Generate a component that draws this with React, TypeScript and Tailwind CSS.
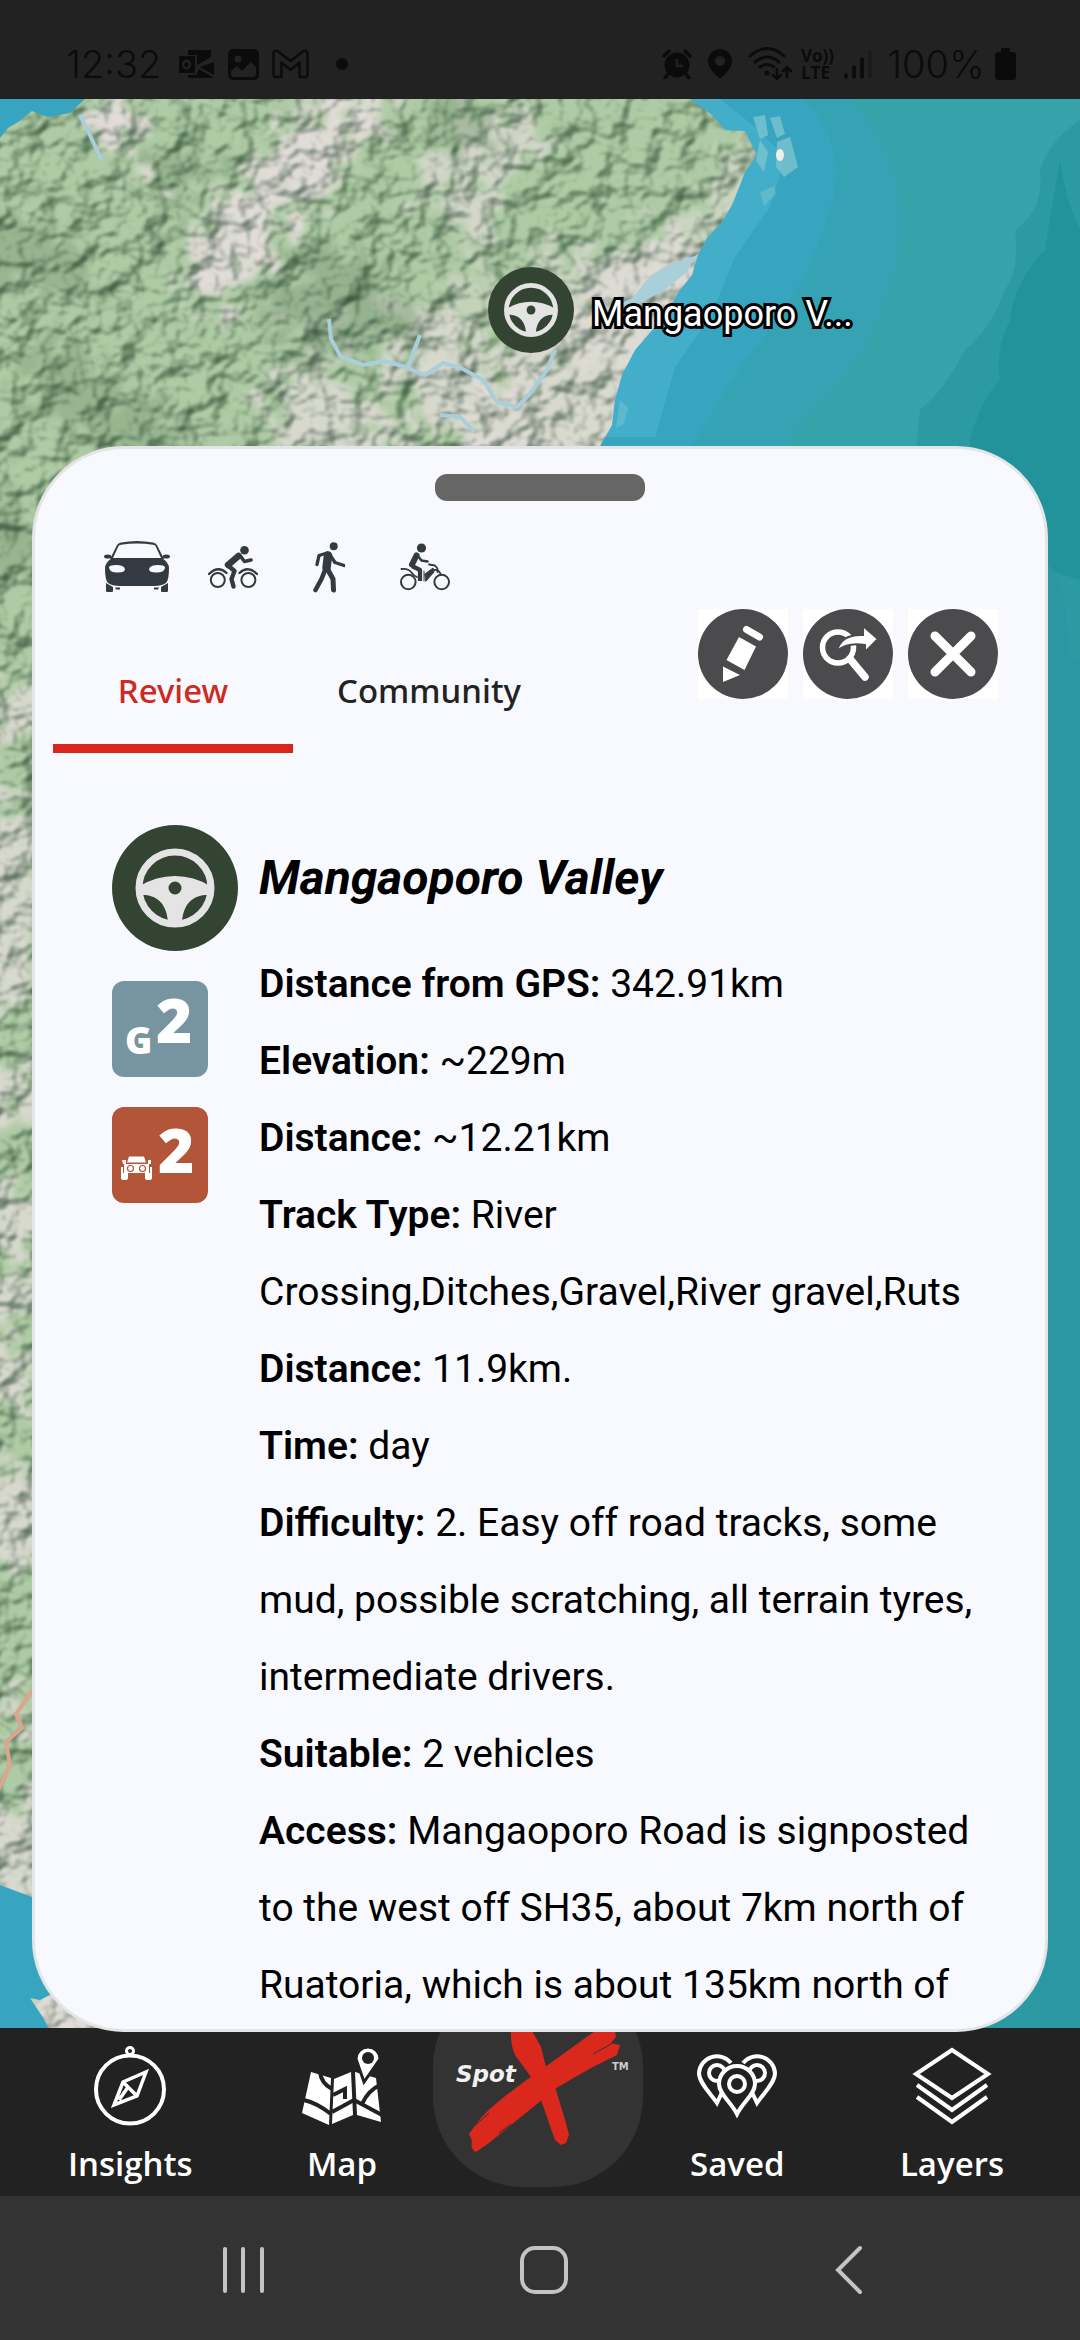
import { FC, ReactNode } from 'react';

const details: { label: string; text: string }[] = [
  { label: 'Distance from GPS:', text: '342.91km' },
  { label: 'Elevation:', text: '~229m' },
  { label: 'Distance:', text: '~12.21km' },
  {
    label: 'Track Type:',
    text: 'River Crossing,Ditches,Gravel,River gravel,Ruts',
  },
  { label: 'Distance:', text: '11.9km.' },
  { label: 'Time:', text: 'day' },
  {
    label: 'Difficulty:',
    text: '2. Easy off road tracks, some mud, possible scratching, all terrain tyres, intermediate drivers.',
  },
  { label: 'Suitable:', text: '2 vehicles' },
  {
    label: 'Access:',
    text: 'Mangaoporo Road is signposted to the west off SH35, about 7km north of Ruatoria, which is about 135km north of',
  },
];

const StatusBar: FC = () => (
  <header className="flex h-[99px] items-end justify-between bg-[#222222] pr-16 pb-[15px] pl-[66px] font-['Inter',sans-serif] text-[38px] leading-10 font-light text-[#0b0b0b]">
    <div className="flex items-center">
      <span className="w-[112px]">12:32</span>
      <svg width="37" height="30" viewBox="0 0 37 30" fill="currentColor">
        <path d="M10 1h23v7l-14 8V6H10zM36 13v13l-14-8zM10 26h8l3-6 15 9H10z" />
        <path
          fillRule="evenodd"
          d="M1 7h16v17H1zM8.500 10.500a4.500 5 0 1 0 .1 0zM8.500 13a2.200 2.700 0 1 1-.1 0z"
        />
      </svg>
      <svg className="ml-[13px]" width="31" height="31" viewBox="0 0 31 31">
        <rect width="31" height="31" rx="5" fill="currentColor" />
        <circle cx="10" cy="10" r="3.500" fill="#222222" />
        <path d="M3 22l6-5 5 5 9-9 5 5v7q0 3-3 3H6q-3 0-3-3z" fill="#222222" />
      </svg>
      <svg
        className="ml-[13px]"
        width="37"
        height="30"
        viewBox="0 0 37 30"
        fill="none"
        stroke="currentColor"
        strokeWidth="2.400"
        strokeLinejoin="round"
      >
        <path d="M1.500 26V4q1-3 4-2l13 10L31.500 2q3-1 4 2v22q0 2-2 2h-6V13.500l-9 7.500-9-7.500V28h-6q-2 0-2-2z" />
      </svg>
      <span className="ml-[27px] h-3 w-3 rounded-full bg-[#0b0b0b]" />
    </div>
    <div className="flex items-center">
      <svg width="30" height="30" viewBox="0 0 30 30" fill="currentColor">
        <circle cx="15" cy="16" r="12.500" />
        <path
          d="M2 7l5-5M28 7l-5-5M6 25l-3 4M24 25l3 4"
          stroke="currentColor"
          strokeWidth="3.500"
          strokeLinecap="round"
        />
        <path d="M15 10v7h6" fill="none" stroke="#222222" strokeWidth="2.500" />
      </svg>
      <svg className="ml-4" width="24" height="30" viewBox="0 0 24 30">
        <path
          fillRule="evenodd"
          fill="currentColor"
          d="M12 0a12 12 0 0 1 12 12c0 7-6 12-12 18C6 24 0 19 0 12A12 12 0 0 1 12 0zm0 7a5 5 0 1 0 .1 0z"
        />
      </svg>
      <svg
        className="ml-4"
        width="44"
        height="34"
        viewBox="0 0 44 34"
        fill="none"
        stroke="currentColor"
        strokeWidth="3"
        strokeLinecap="round"
      >
        <path d="M2 9q17-15 34 0M7 15q12-10 24 0M12 20q7-5 14 0" />
        <path d="M29 22v10m-4-4l4 4 4-4M39 30V20m-4 4l4-4 4 4" strokeWidth="2.600" />
        <circle cx="19" cy="26" r="1" />
      </svg>
      <span className="ml-[9px] flex w-[31px] flex-col font-['Open_Sans',sans-serif] text-[17px] leading-[17px] font-bold">
        <span>Vo))</span>
        <span>LTE</span>
      </span>
      <svg
        className="ml-3"
        width="28"
        height="32"
        viewBox="0 0 28 32"
        stroke="currentColor"
        strokeWidth="3.600"
        strokeLinecap="round"
      >
        <path d="M2 27v2M10 19v10M18 11v18" />
        <path d="M26 4v25" opacity="0.300" />
      </svg>
      <span className="ml-[15px] w-[104px]">100%</span>
      <svg className="ml-1" width="21" height="32" viewBox="0 0 21 32" fill="currentColor">
        <path d="M6 0h9v4h3q3 0 3 3v22q0 3-3 3H3q-3 0-3-3V7q0-3 3-3h3z" />
      </svg>
    </div>
  </header>
);

const SteeringWheel: FC<{ className: string }> = ({ className }) => (
  <svg className={className} viewBox="0 0 126 126">
    <circle cx="63" cy="63" r="63" fill="#334433" />
    <circle cx="63" cy="63" r="36" fill="none" stroke="#e4e4e4" strokeWidth="7" />
    <path
      d="M28 61Q44 51 63 51T98 61V70C84 69 71 76 70 98H56C55 76 42 69 28 70z"
      fill="#e4e4e4"
    />
    <circle cx="63" cy="63" r="6.500" fill="#334433" />
  </svg>
);

const TerrainMap: FC = () => (
  <svg
    className="absolute inset-0 h-full w-full"
    viewBox="0 99 1080 1929"
    preserveAspectRatio="xMidYMin slice"
    aria-hidden="true"
  >
    <defs>
      <filter
        id="relief"
        x="-80"
        y="19"
        width="1160"
        height="2089"
        filterUnits="userSpaceOnUse"
        colorInterpolationFilters="sRGB"
      >
        <feTurbulence type="fractalNoise" baseFrequency="0.045" numOctaves="4" seed="4" result="rough" />
        <feDisplacementMap in="SourceGraphic" in2="rough" scale="110" xChannelSelector="R" yChannelSelector="G" result="moved" />
        <feGaussianBlur in="moved" stdDeviation="3" result="ground" />
        <feTurbulence type="fractalNoise" baseFrequency="0.032 0.036" numOctaves="3" seed="11" result="hills" />
        <feDiffuseLighting in="hills" surfaceScale="13" diffuseConstant="1.120" lightingColor="#ffffff" result="light">
          <feDistantLight azimuth="225" elevation="58" />
        </feDiffuseLighting>
        <feComponentTransfer in="light" result="shade">
          <feFuncR type="linear" slope="0.620" intercept="0.350" />
          <feFuncG type="linear" slope="0.520" intercept="0.450" />
          <feFuncB type="linear" slope="0.580" intercept="0.390" />
        </feComponentTransfer>
        <feBlend in="ground" in2="shade" mode="multiply" result="lit" />
        <feGaussianBlur in="lit" stdDeviation="1" />
      </filter>
      <clipPath id="land">
        <path d="M85 99L70 113 48 117 32 111 18 122 8 128 0 138V1885L32 1897 90 1900 500 1900 560 600 600 446 612 425 615 400 622 375 635 350 648 335 665 315 680 290 692 275 698 255 707 238 722 222 732 205 740 185 745 172 757 155 752 145 745 131 725 130 712 115 690 99z" />
        <path d="M30 1998l10 2 12-6 100 0v40H52l-10-18z" />
      </clipPath>
    </defs>
    <rect y="99" width="1080" height="1929" fill="#38a5c0" />
    <path
      d="M690 99h30l35 28 30 30-15 50-35 50-25 60-35 50-20 70h-90z"
      fill="#43aeca"
    />
    <path
      d="M800 99q50 40 30 110t-60 120-50 70-45 70v1579h435V99z"
      fill="#35a3b4"
    />
    <path d="M850 99q70 80 45 170t-70 130-30 60v1569h290V99z" fill="#36a2aa" />
    <path
      d="M1080 120q-30 20-40 50 5 40-25 60 5 40-10 60-15 40-40 60-20 40-45 60l-6 60v1559h168z"
      fill="#2b9aa3"
    />
    <path
      d="M1060 160q-10 60-15 90-30 30-35 70-15 30-10 60-20 20-30 60l10 60 68 40v30l32 10V230q-15-30-20-70z"
      fill="#22939b"
    />
    <path d="M1040 560q24 10 26 60t14 40v1368h-40z" fill="#2b97a2" />
    <g fill="#7cc3d0">
      <path d="M753 117l12-2 3 20-8 4zM770 118l10-2 5 18-8 4zM777 142l13-5 8 30-14 10-8-10zM760 140l8 12-4 20-8-12z" opacity="0.800" />
      <path d="M760 192l14-6 2 8-12 12zM620 400l8 8-4 16-8 4z" opacity="0.500" />
    </g>
    <ellipse cx="780" cy="155" rx="4" ry="6" fill="#f1efe6" />
    <g clipPath="url(#land)">
      <g filter="url(#relief)">
        <rect x="-160" y="-60" width="1300" height="2300" fill="#b4d2aa" />
        <g fill="#e8e3de">
          <path d="M85 90l30-10 10 40 30 40-10 20-30-30-20-30z" />
          <path d="M310 100l70 0 10 30-40 20-10 40-50 20-20 40-50 60-40-10 10-50 30-50 50-40z" />
          <path d="M470 110l70 0-10 40-40 40 10 40-10 40-20-20-40-60-20 30 10-60z" opacity="0.700" />
          <path d="M430 300l30-20 60 0-20 50-60 20z" opacity="0.400" />
          <path d="M530 240l80 10 60-20 50-50 20-40 30-20 10 60-40 120-80 60-80 0-30-40z" opacity="0.550" />
          <path d="M520 340l50-10 20-60 90-40 40 20-100 240h-170l0-60 40-20z" opacity="0.850" />
          <path d="M380 300l50 0 60 60 30 50-20 50-40-20-60-60z" opacity="0.800" />
          <path d="M290 320l40 0 10 40-30 20zM270 380l50-10 40 50 40-10 20 20-30 40-50 10-60-30z" opacity="0.800" />
          <path
            d="M-90 700l150-20v50l-150 30zM-90 800h140v220l-140-20zM-90 1060h150v60h-150zM-90 1180l140 20v50l-140 20zM-90 1280h140v40h-140zM-90 1360l140-20v60l-140 10zM-90 1480l140-20v110l-140-10zM-90 1700h140v30h-140zM-90 1800h150v130h-150z"
            opacity="0.800"
          />
          <path d="M20 1980h140v70H20z" />
        </g>
        <g fill="#7f9f7b">
          <path d="M340 240l60 50 40 60-60-10-60 20-60-40 20-50z" opacity="0.500" />
          <path
            d="M-90 180l180 60-10 60-170-20zM30 330l120 60 60 70-110-10-80-60zM430 90l70 10-10 50-60-10zM160 130l60 30-20 60-50-20zM-90 480l130 20v70h-130z"
            opacity="0.450"
          />
        </g>
      </g>
      <path
        d="M555 350l-8 20-18 25-12 12-20-5-14-22-22-12-18-5-18 12-20-8-20-6-22 4-22-8-10-18-2-20M420 335l-12 32M80 115l8 16 14 30M440 415l20 2 15 15M700 255l-18 12"
        fill="none"
        stroke="#a9cfdb"
        strokeWidth="4"
      />
      <path d="M695 256l-8 16-25 20-25 12-35 8 30-14 18-22 20-12z" fill="#a9cfdb" />
      <path
        d="M34 1688l-18 26 6 14-16 14 4 24-12 24"
        fill="none"
        stroke="#dba68c"
        strokeWidth="4"
      />
    </g>
  </svg>
);

const MapMarker: FC = () => (
  <div className="absolute top-[168px] left-[488px] flex items-center gap-[18px]">
    <SteeringWheel className="h-[86px] w-[86px]" />
    <span className="pt-2 font-['Roboto',sans-serif] text-[36px] leading-10 text-white [-webkit-text-stroke:6px_black] [paint-order:stroke_fill]">
      Mangaoporo V...
    </span>
  </div>
);

const ActivityIcons: FC = () => (
  <div className="flex items-center pt-9 pl-[54px] text-[#343a42]">
    <span className="flex w-24 justify-center">
      <svg width="66" height="60" viewBox="0 -4 66 60" fill="currentColor">
        <path
          fillRule="evenodd"
          d="M6 18L13 4Q14 2 17 1.500Q33-1.500 49 1.500Q52 2 53 4L60 18zM9 17H57L51.500 5Q51 4 49 3.700Q33 1.500 17 3.700Q15 4 14.500 5z"
        />
        <ellipse cx="3.700" cy="15.500" rx="3.700" ry="2" />
        <ellipse cx="62.300" cy="15.500" rx="3.700" ry="2" />
        <path
          fillRule="evenodd"
          d="M8 17H58Q65 22 65 27Q65 39 62 42Q58 45 50 45H16Q8 45 4 42Q1 39 1 27Q1 22 8 17zM5 26Q5 31 12 31.500Q21 32 21 28Q20 24 12 24Q6 24 5 26zM61 26Q60 24 54 24Q46 24 45 28Q45 32 54 31.500Q61 31 61 26z"
        />
        <path d="M2 42L9 46V50Q9 51 8 51H3.500Q2 51 2 50zM64 42L57 46V50Q57 51 58 51H62.500Q64 51 64 50zM11 46.500h5v2h-4zM50 46.500h5l-1 2h-4z" />
      </svg>
    </span>
    <span className="flex w-24 justify-center">
      <svg
        width="50"
        height="60"
        viewBox="0 -9 50 60"
        fill="none"
        stroke="currentColor"
        strokeLinecap="round"
        strokeLinejoin="round"
      >
        <circle cx="36.500" cy="4.300" r="4.300" fill="currentColor" stroke="none" />
        <path d="M30.500 10L20 19" strokeWidth="6.500" />
        <path d="M32 9.500L36.500 15.500L43 14" strokeWidth="3.600" />
        <path d="M20 19.500L26.500 25L23.500 33L25.500 40.500" strokeWidth="4.400" />
        <circle cx="9.800" cy="34" r="7" strokeWidth="2" />
        <circle cx="40.400" cy="34" r="7" strokeWidth="2" />
        <path d="M1 28Q10 19 18.500 27M31.500 27Q40 19 49 28" strokeWidth="2.400" />
      </svg>
    </span>
    <span className="flex w-24 justify-center">
      <svg
        width="32"
        height="60"
        viewBox="0 -5 32 60"
        fill="none"
        stroke="currentColor"
        strokeLinecap="round"
        strokeLinejoin="round"
      >
        <circle cx="20.700" cy="4.300" r="4" fill="currentColor" stroke="none" />
        <path d="M15 13.500L13.500 26" strokeWidth="8.500" />
        <path d="M14 11L6 13.500L4 22.500" strokeWidth="3.400" />
        <path d="M17 13L22 20.500L31 23.500" strokeWidth="3.400" />
        <path d="M12.500 27L8.500 37L2.500 48" strokeWidth="4.600" />
        <path d="M14.500 27L20 37L20.500 48" strokeWidth="5" />
      </svg>
    </span>
    <span className="flex w-24 justify-center">
      <svg
        width="50"
        height="60"
        viewBox="0 -6 50 60"
        fill="none"
        stroke="currentColor"
        strokeLinecap="round"
        strokeLinejoin="round"
      >
        <circle cx="21.500" cy="5" r="4.600" fill="currentColor" stroke="none" />
        <path d="M16.500 12.500L12 21.500" strokeWidth="6" />
        <path d="M17 12L21.500 17.500L27.500 18.500" strokeWidth="2.600" />
        <path d="M12 23L20 27V38" strokeWidth="4.200" strokeLinecap="butt" />
        <path d="M25 31L33 25L34 29L26 38zM24 28V38" fill="currentColor" strokeWidth="1" />
        <path d="M29 21.500L35 22.500L37.500 25.500V29M34 27Q39 26 41 32M1.500 26Q8 25 11 29T17 34" strokeWidth="1.800" />
        <circle cx="8.300" cy="39" r="7.300" strokeWidth="2" />
        <circle cx="41.700" cy="39" r="7.300" strokeWidth="2" />
      </svg>
    </span>
  </div>
);

const RoundButton: FC<{ label: string; children: ReactNode }> = ({
  label,
  children,
}) => (
  <button type="button" aria-label={label} className="bg-white">
    <svg width="90" height="90" viewBox="0 0 90 90">
      <circle cx="45" cy="45" r="45" fill="#4b4b4d" />
      {children}
    </svg>
  </button>
);

const CardToolbar: FC = () => (
  <div className="mt-3 flex items-start justify-between pr-[47px] pl-[18px]">
    <div
      role="tablist"
      className="flex font-['Noto_Sans',sans-serif] text-[33px] leading-12 font-medium"
    >
      <button
        type="button"
        role="tab"
        aria-selected="true"
        className="h-36 w-60 border-b-9 border-[#da251c] pt-7 text-[#cf2a22]"
      >
        Review
      </button>
      <button
        type="button"
        role="tab"
        aria-selected="false"
        className="h-36 w-[272px] border-b-9 border-transparent pt-7 text-[#222222]"
      >
        Community
      </button>
    </div>
    <div className="flex gap-[15px]">
      <RoundButton label="Edit">
        <path d="M41 28L58 37.500L46.500 61L28.500 51zM25 57.500V73L42 66z" fill="#ffffff" />
        <path d="M48.500 20.500L61.500 28" stroke="#ffffff" strokeWidth="7" strokeLinecap="round" />
      </RoundButton>
      <RoundButton label="Search from here">
        <circle cx="35" cy="38.500" r="15.500" fill="none" stroke="#ffffff" strokeWidth="5.500" />
        <path d="M47 50L62 68" stroke="#ffffff" strokeWidth="7.500" strokeLinecap="round" />
        <path
          d="M34 42Q38 25 60 26V17L75 30L62 43V36Q44 33 34 42z"
          fill="#ffffff"
          stroke="#4b4b4d"
          strokeWidth="2"
        />
      </RoundButton>
      <RoundButton label="Close">
        <path d="M27 27L63 63M63 27L27 63" stroke="#ffffff" strokeWidth="9" strokeLinecap="round" />
      </RoundButton>
    </div>
  </div>
);

const GradeBadges: FC = () => (
  <div className="flex w-[126px] shrink-0 flex-col gap-[30px]">
    <SteeringWheel className="h-[126px] w-[126px]" />
    <svg
      width="96"
      height="96"
      viewBox="0 0 96 96"
      fill="#ffffff"
      className="rounded-xl bg-[#7794a1] font-['Open_Sans',sans-serif] font-extrabold"
    >
      <text x="13" y="73" fontSize="37">
        G
      </text>
      <text x="44" y="62" fontSize="62">
        2
      </text>
    </svg>
    <svg
      width="96"
      height="96"
      viewBox="0 0 96 96"
      fill="#ffffff"
      className="rounded-xl bg-[#b25539] font-['Open_Sans',sans-serif] font-extrabold"
    >
      <path d="M17 49.500H32L34 55.500H15zM10 53h4v4h-3zM36 53h3v4h-3zM12 57h25v9H12zM9 60h2v6h5v5q0 2-2 2h-3q-2 0-2-2zM38 60h2v11q0 2-2 2h-3q-2 0-2-2v-5h5z" />
      <g fill="none" stroke="#b25539" strokeWidth="1.200">
        <circle cx="18.500" cy="61.500" r="3" />
        <circle cx="30.500" cy="61.500" r="3" />
      </g>
      <text x="46" y="66" fontSize="62">
        2
      </text>
    </svg>
  </div>
);

const SpotCard: FC = () => (
  <main className="relative z-10 mx-8 mt-[347px] -mb-1 rounded-[92px] border-3 border-[#e4e5e6] bg-[#f8f9ff]">
    <div className="mx-auto mt-[25px] h-[27px] w-[210px] rounded-xl bg-[#666666]" />
    <ActivityIcons />
    <CardToolbar />
    <div className="flex gap-[21px] pt-[72px] pr-[50px] pb-[5px] pl-[77px]">
      <GradeBadges />
      <article className="pt-[5px] font-['Roboto',sans-serif] text-[39px] leading-[77px] text-black">
        <h1 className="mb-5 text-[48px] leading-24 font-bold italic">
          Mangaoporo Valley
        </h1>
        {details.map(({ label, text }) => (
          <p key={label + text}>
            <b className="font-semibold">{label}</b> {text}
          </p>
        ))}
      </article>
    </div>
  </main>
);

const NavLink: FC<{ label: string; children: ReactNode }> = ({
  label,
  children,
}) => (
  <a href="#" className="flex flex-col items-center">
    <svg width="80" height="80" viewBox="0 0 80 80" fill="none" stroke="#ffffff" strokeWidth="4">
      {children}
    </svg>
    <span className="pt-[18px]">{label}</span>
  </a>
);

const BottomNav: FC = () => (
  <nav className="flex h-[168px] bg-[#222222] font-['Open_Sans',sans-serif] text-[33px] leading-10 font-semibold text-white">
    <div className="flex flex-1 justify-between pt-[18px] pr-[51px] pl-[68px]">
      <NavLink label="Insights">
        <circle cx="40" cy="43.500" r="34" />
        <circle cx="40" cy="5" r="3.500" strokeWidth="3" />
        <path d="M56 26L47 50L24 59L33 36zM33 36L47 50M38 41L29 54" strokeWidth="3.500" />
      </NavLink>
      <NavLink label="Map">
        <g fill="#ffffff" stroke="none">
          <path d="M9 26L29 32L27 79L0 67zM32 33L49 26L51 69L30 78zM53 26L74 32L79 76L55 69z" />
        </g>
        <path
          d="M2 54Q15 57 29 68M30 66L52 54L80 69M18 26Q19 37 30 43M31 49L43 43V53M80 38Q66 44 60 58"
          stroke="#222222"
        />
        <path d="M62 36L54 13A12 12 0 1 1 78 13z" fill="#ffffff" stroke="#222222" strokeWidth="3" />
        <circle cx="66" cy="12" r="6" fill="#222222" stroke="none" />
      </NavLink>
    </div>
    <a href="#" aria-label="SpotX" className="-mt-[51px] h-[210px] w-[210px] rounded-[90px] bg-[#333333]">
      <svg viewBox="0 0 210 210">
        <g fill="#da281c">
          <path d="M36 157Q48 138 65 125Q88 106 112 90L162 54L182 54L183 60L178 66L187 68L184 78L158 91L125 110L78 148L56 166L43 175Q37 172 39 164z" />
          <path d="M78 50L97 50L108 70L113 90L123 113L133 146L136 158L133 166L128 168L122 163L108 123L98 100L82 78Q77 68 78 50z" />
        </g>
        <path d="M38 152l18-16M160 77l20-11M66 156l12-9" stroke="#333333" strokeWidth="1" />
        <text
          x="23"
          y="105"
          fill="#f2f2f2"
          fontSize="23"
          className="font-['DejaVu_Sans',sans-serif] font-bold italic"
        >
          Spot
        </text>
        <text
          x="179"
          y="93"
          fill="#cccccc"
          fontSize="10"
          className="font-['DejaVu_Sans',sans-serif]"
        >
          TM
        </text>
      </svg>
    </a>
    <div className="flex flex-1 justify-between pt-[18px] pr-[76px] pl-[47px]">
      <NavLink label="Saved">
        <path d="M27 42L20 57C14 48 2 37 2 27A18 18 0 0 1 34 17M53 42L60 57C66 48 78 37 78 27A18 18 0 0 0 46 17" />
        <circle cx="20" cy="27" r="8" />
        <circle cx="60" cy="27" r="8" />
        <path d="M40 68C34 56 22 48 22 38A18 18 0 0 1 58 38C58 48 46 56 40 68z" fill="#222222" />
        <circle cx="40" cy="38" r="8" />
      </NavLink>
      <NavLink label="Layers">
        <path d="M40 4L76 28L40 52L4 28zM5 39L40 64L75 39M5 51L40 76L75 51" />
      </NavLink>
    </div>
  </nav>
);

const SystemNav: FC = () => (
  <footer className="flex h-36 items-center justify-between bg-[#333333] pt-1 pr-[214px] pl-[217px]">
    <button type="button" aria-label="Recent apps">
      <svg width="52" height="52" viewBox="0 0 52 52" stroke="#c4c4c4" strokeWidth="4" strokeLinecap="round">
        <path d="M8 5v42M26 5v42M45 5v42" />
      </svg>
    </button>
    <button type="button" aria-label="Home">
      <svg width="52" height="52" viewBox="0 0 52 52" fill="none" stroke="#c4c4c4" strokeWidth="4">
        <rect x="6" y="4" width="44" height="44" rx="13" />
      </svg>
    </button>
    <button type="button" aria-label="Back">
      <svg
        width="52"
        height="52"
        viewBox="0 0 52 52"
        fill="none"
        stroke="#c4c4c4"
        strokeWidth="4"
        strokeLinecap="round"
      >
        <path d="M46 4L24 26L46 48" />
      </svg>
    </button>
  </footer>
);

export default function App() {
  return (
    <div className="flex min-h-screen flex-col bg-[#333333]">
      <StatusBar />
      <div className="relative flex flex-col">
        <TerrainMap />
        <MapMarker />
        <SpotCard />
      </div>
      <BottomNav />
      <SystemNav />
    </div>
  );
}
